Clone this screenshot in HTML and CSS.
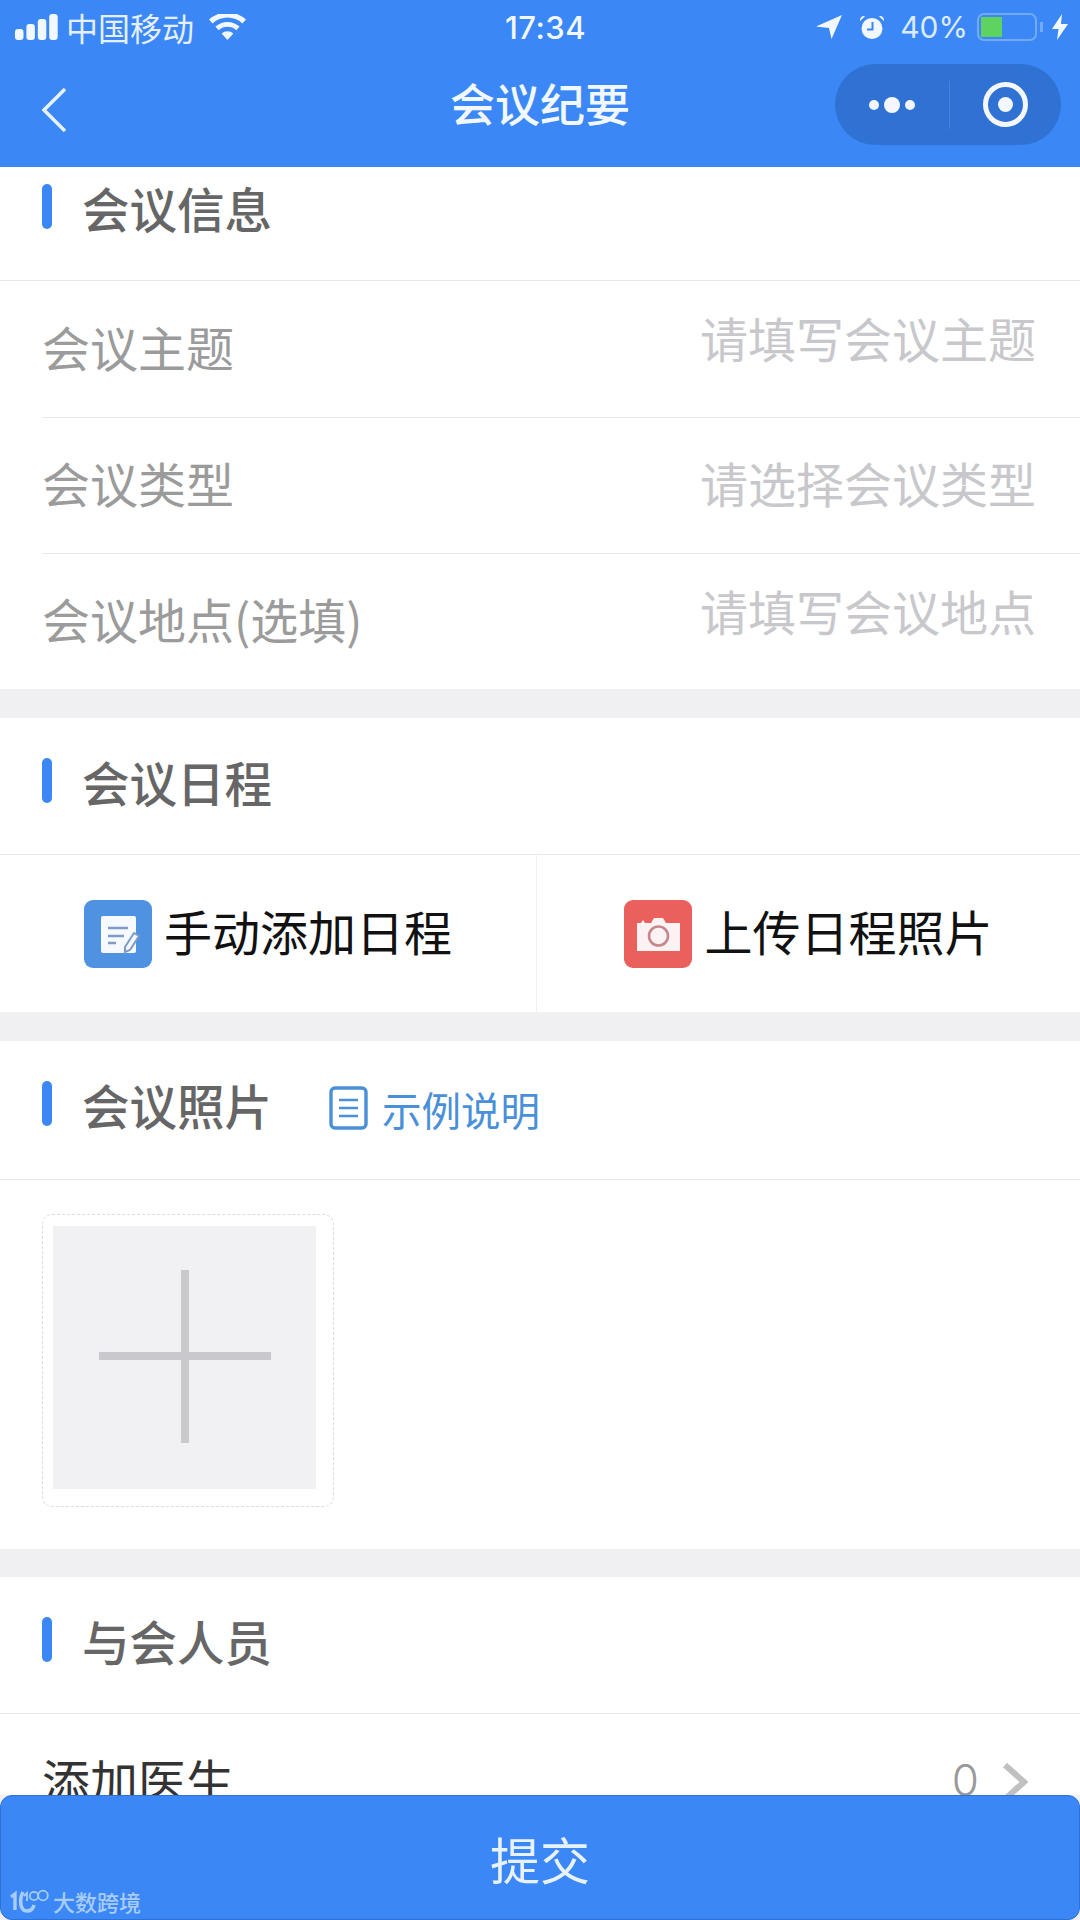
FILE: index.html
```html
<!DOCTYPE html>
<html lang="zh-CN">
<head>
   <meta charset="UTF-8">
   <meta name="viewport" content="width=device-width, initial-scale=1.0">
   <title>会议纪要</title>
   <link rel="stylesheet" href="styles.css">
</head>
<body>
   <!-- Status bar and navigation bar -->
   <header class="top">
       <div class="status">
           <div class="status-left">
               <svg class="signal" width="43" height="26" viewBox="0 0 43 26">
                   <rect x="0" y="15" width="8.5" height="11" rx="3"/>
                   <rect x="11.4" y="10" width="8.5" height="16" rx="3"/>
                   <rect x="22.8" y="5" width="8.5" height="21" rx="3"/>
                   <rect x="34.2" y="0" width="8.5" height="26" rx="3"/>
               </svg>
               <span class="carrier">中国移动</span>
               <svg class="wifi" width="37" height="26" viewBox="0 0 37 26">
                   <path d="M18.5 26 L12.6 19.4 A9 9 0 0 1 24.4 19.4 Z"/>
                   <path d="M9.6 16.2 L6.4 12.6 A18 18 0 0 1 30.6 12.6 L27.4 16.2 A13.4 13.4 0 0 0 9.6 16.2 Z"/>
                   <path d="M3.6 9.4 L0 5.6 A27 27 0 0 1 37 5.6 L33.4 9.4 A22 22 0 0 0 3.6 9.4 Z"/>
               </svg>
           </div>
           <span class="time">17:34</span>
           <div class="status-right">
               <svg class="locate" width="26" height="24" viewBox="0 0 26 24">
                   <path d="M26 0 L0 11.5 L13 13 L15.5 24 Z"/>
               </svg>
               <svg class="alarm" width="26" height="24" viewBox="0 0 26 24">
                   <circle cx="13" cy="13.5" r="10.5"/>
                   <path class="alarm-hand" d="M13.5 7 V14.5 H8" fill="none" stroke-width="2"/>
                   <path d="M1 6 L6 1.2 A4 4 0 0 0 1 6 Z M25 6 L20 1.2 A4 4 0 0 1 25 6 Z"/>
               </svg>
               <span class="battery-text">40%</span>
               <div class="battery"><div class="battery-fill"></div></div>
               <div class="battery-tip"></div>
               <svg class="bolt" width="16" height="26" viewBox="0 0 16 26">
                   <path d="M10 0 L0 15 H6.5 L5 26 L16 10 H9 Z"/>
               </svg>
           </div>
       </div>
       <nav class="nav">
           <svg class="back" width="24" height="44" viewBox="0 0 24 44">
               <path d="M23 1 L2 22 L23 43" fill="none" stroke-width="3.5"/>
           </svg>
           <h1 class="title">会议纪要</h1>
           <div class="capsule">
               <div class="capsule-dots">
                   <i class="dot"></i><i class="dot dot-big"></i><i class="dot"></i>
               </div>
               <div class="capsule-line"></div>
               <div class="capsule-target"><i class="target-dot"></i></div>
           </div>
       </nav>
   </header>

   <main class="content">
       <div class="scroll">
           <!-- 会议信息 -->
           <section class="card">
               <div class="head"><i class="head-bar"></i><h2 class="head-text">会议信息</h2></div>
               <div class="row">
                   <span class="label">会议主题</span>
                   <span class="holder holder-up">请填写会议主题</span>
               </div>
               <div class="row row-line">
                   <span class="label">会议类型</span>
                   <span class="holder">请选择会议类型</span>
               </div>
               <div class="row row-line">
                   <span class="label">会议地点(选填)</span>
                   <span class="holder holder-up">请填写会议地点</span>
               </div>
           </section>

           <!-- 会议日程 -->
           <section class="card">
               <div class="head"><i class="head-bar"></i><h2 class="head-text">会议日程</h2></div>
               <div class="actions">
                   <div class="action action-left">
                       <svg class="action-icon" width="68" height="68" viewBox="0 0 68 68">
                           <rect width="68" height="68" rx="9" fill="#5092e2"/>
                           <rect x="17" y="16" width="35" height="37" rx="2" fill="#f6f9fd"/>
                           <path d="M24 28 H44 M24 36 H40 M24 43 H32" stroke="#7b9cc6" stroke-width="2.6" fill="none"/>
                           <path d="M41 47 L50 33 L55 36 L46 50 L41 52 Z" fill="#f6f9fd" stroke="#7b9cc6" stroke-width="2"/>
                       </svg>
                       <span class="action-text">手动添加日程</span>
                   </div>
                   <div class="action">
                       <svg class="action-icon" width="68" height="68" viewBox="0 0 68 68">
                           <rect width="68" height="68" rx="9" fill="#e9605c"/>
                           <path d="M13 23 H17 L19 20 L21 23 H27 L30 18 H39 L42 23 H56 V51 H13 Z" fill="#fbf3f3"/>
                           <circle cx="34.5" cy="36" r="9.5" fill="#fbf3f3" stroke="#c8878c" stroke-width="2.6"/>
                       </svg>
                       <span class="action-text">上传日程照片</span>
                   </div>
               </div>
           </section>

           <!-- 会议照片 -->
           <section class="card card-photo">
               <div class="head head-tall">
                   <i class="head-bar"></i><h2 class="head-text">会议照片</h2>
                   <svg class="doc" width="39" height="44" viewBox="0 0 39 44">
                       <rect x="2" y="2" width="35" height="40" rx="4" fill="none" stroke="#4a90d9" stroke-width="3.4"/>
                       <path d="M10 14 H29 M10 22 H29 M10 30 H29" stroke="#4a90d9" stroke-width="2.6" fill="none"/>
                   </svg>
                   <span class="doc-text">示例说明</span>
               </div>
               <div class="photos">
                   <div class="photo-box">
                       <div class="photo-add"><i class="plus-h"></i><i class="plus-v"></i></div>
                   </div>
               </div>
           </section>

           <!-- 与会人员 -->
           <section class="card">
               <div class="head"><i class="head-bar"></i><h2 class="head-text">与会人员</h2></div>
               <div class="row row-doctor">
                   <span class="label label-dark">添加医生</span>
                   <span class="count">0</span>
                   <svg class="more" width="26" height="38" viewBox="0 0 26 38">
                       <path d="M3 2 L22 19 L3 36" fill="none" stroke-width="6"/>
                   </svg>
               </div>
           </section>
       </div>
   </main>

   <!-- Submit button with the watermark over it -->
   <button class="submit">提交</button>
   <div class="mark">
       <svg width="39" height="24" viewBox="0 0 39 24">
           <path d="M1 8 L5 5 V21" fill="none" stroke-width="3.4"/>
           <path d="M13 3 C9 11 10 22 17 22 C20 22 23 20 24 16" fill="none" stroke-width="3.6"/>
           <path d="M14 7 L17 4 V12" fill="none" stroke-width="1.8"/>
           <circle cx="24" cy="7" r="4.2" fill="none" stroke-width="1.8"/>
           <circle cx="33" cy="6.5" r="4.8" fill="none" stroke-width="1.8"/>
       </svg>
       <span class="mark-text">大数跨境</span>
   </div>
</body>
</html>
```

FILE: styles.css
```css
/* page */
body {
    position: relative;
    display: flex;
    flex-direction: column;
    width: 1080px;
    height: 1920px;
    margin: 0;
    overflow: hidden;
    background-color: #f0f0f2;
    font-family: "Noto Sans CJK SC", "Noto Sans", sans-serif;
}

/* top blue area */
.top {
    flex: none;
    height: 167px;
    background-color: #3b87f5;
    color: #f2f8ff;
}

.status {
    display: grid;
    grid-template-columns: 1fr auto 1fr;
    align-items: center;
    height: 54px;
}

.status svg {
    fill: #f2f8ff;
    flex: none;
}

.status-left {
    display: flex;
    align-items: center;
    padding-left: 15px;
}

.carrier {
    margin-left: 8px;
    font-size: 32px;
    line-height: 40px;
    color: #e4f0ff;
}

.wifi {
    margin-left: 15px;
}

.time {
    margin-left: 11px;
    font-family: Inter, "Liberation Sans", sans-serif;
    font-size: 31px;
    font-weight: 500;
    letter-spacing: 0.5px;
}

.status-right {
    display: flex;
    align-items: center;
    justify-content: flex-end;
    padding-right: 12px;
}

.alarm {
    margin-left: 17px;
}

.alarm-hand {
    stroke: #3b87f5;
}

.battery-text {
    margin-left: 15px;
    font-family: Inter, "Liberation Sans", sans-serif;
    font-size: 30px;
    color: #dcebff;
}

.battery {
    box-sizing: border-box;
    width: 60px;
    height: 28px;
    margin-left: 9px;
    padding: 2px;
    border: 2px solid #72abf5;
    border-radius: 7px;
}

.battery-fill {
    width: 21px;
    height: 20px;
    background-color: #5fd35f;
}

.battery-tip {
    width: 3px;
    height: 10px;
    margin-left: 3px;
    background-color: #72abf5;
}

.bolt {
    margin-left: 9px;
}

.nav {
    display: grid;
    grid-template-columns: 1fr auto 1fr;
    align-items: center;
    height: 101px;
}

.back {
    margin-top: 11px;
    margin-left: 42px;
    stroke: #e8f2ff;
}

.title {
    margin: 0 0 4px;
    font-size: 45px;
    font-weight: 500;
    line-height: 60px;
}

.capsule {
    justify-self: end;
    display: flex;
    align-items: center;
    width: 226px;
    height: 81px;
    margin-right: 19px;
    border-radius: 41px;
    background-color: #2f72d4;
}

.capsule-dots {
    display: flex;
    align-items: center;
    justify-content: center;
    gap: 5px;
    width: 114px;
}

.dot {
    width: 10px;
    height: 10px;
    border-radius: 50%;
    background-color: #f4f8fe;
}

.dot-big {
    width: 16px;
    height: 16px;
}

.capsule-line {
    width: 1px;
    height: 48px;
    background-color: #4a85dc;
}

.capsule-target {
    box-sizing: border-box;
    display: flex;
    align-items: center;
    justify-content: center;
    width: 45px;
    height: 45px;
    margin-left: 33px;
    border: 5px solid #f4f8fe;
    border-radius: 50%;
}

.target-dot {
    width: 15px;
    height: 15px;
    border-radius: 50%;
    background-color: #f4f8fe;
}

/* scrolled content, first header sits partly under the nav */
.content {
    flex: 1;
    overflow: hidden;
}

.scroll {
    margin-top: -23px;
}

.card {
    margin-bottom: 29px;
    background-color: #fff;
}

.card-photo {
    margin-bottom: 28px;
}

.head {
    display: flex;
    align-items: center;
    height: 136px;
    padding-left: 42px;
    border-bottom: 1px solid #e8e8ea;
}

.head-tall {
    height: 136px;
    padding-bottom: 2px;
}

.head-bar {
    width: 10px;
    height: 45px;
    margin-bottom: 11px;
    border-radius: 5px;
    background-color: #3b87f5;
}

.head-text {
    margin: 0 0 9px 30px;
    font-size: 47.5px;
    font-weight: 500;
    line-height: 60px;
    color: #666;
}

/* form rows */
.row {
    display: flex;
    align-items: center;
    justify-content: space-between;
    height: 136px;
    margin-left: 42px;
    padding-right: 44px;
}

.row-line {
    box-sizing: border-box;
    border-top: 1px solid #e8e8ea;
}

.label {
    margin-bottom: 7px;
    font-size: 48px;
    line-height: 60px;
    color: #9b9b9b;
}

.label-dark {
    margin-right: auto;
    color: #333;
}

.holder {
    margin-bottom: 7px;
    font-size: 48px;
    line-height: 60px;
    color: #c8c8cc;
}

.holder-up {
    margin-bottom: 24px;
}

.row-doctor {
    padding-right: 52px;
}

.count {
    margin-bottom: 4px;
    font-family: Inter, "Liberation Sans", sans-serif;
    font-size: 44px;
    font-weight: 300;
    color: #999;
}

.more {
    margin-left: 23px;
    stroke: #c0c0c0;
}

/* action buttons */
.actions {
    display: flex;
    height: 157px;
}

.action {
    flex: 1;
    display: flex;
    align-items: center;
    justify-content: center;
    gap: 12px;
}

.action-left {
    flex: none;
    width: 536px;
    border-right: 1px solid #f0f0f2;
}

.action-text {
    margin-bottom: 7px;
    font-size: 48px;
    line-height: 60px;
    color: #111;
}

.doc {
    margin-bottom: 3px;
    margin-left: 57px;
}

.doc-text {
    margin-left: 14px;
    font-size: 39.5px;
    line-height: 50px;
    color: #4a90d9;
}

/* photo picker */
.photos {
    padding: 34px 0 42px 42px;
}

.photo-box {
    box-sizing: border-box;
    width: 292px;
    height: 293px;
    padding: 11px 10px;
    border: 1px dashed #dcdcdf;
    border-radius: 10px;
}

.photo-add {
    position: relative;
    width: 263px;
    height: 263px;
    background-color: #f1f0f3;
}

.plus-h {
    position: absolute;
    left: 46px;
    top: 126px;
    width: 172px;
    height: 8px;
    background-color: #c9c8cc;
}

.plus-v {
    position: absolute;
    left: 128px;
    top: 44px;
    width: 8px;
    height: 173px;
    background-color: #c9c8cc;
}

/* submit button */
.submit {
    flex: none;
    height: 125px;
    padding: 0;
    border: 1px solid #2f72d4;
    border-radius: 12px;
    background-color: #3b87f5;
    font-family: inherit;
    font-size: 50px;
    color: #e8f2ff;
}

/* watermark */
.mark {
    position: absolute;
    left: 10px;
    top: 1888px;
    display: flex;
    align-items: center;
    gap: 4px;
}

.mark svg {
    stroke: #a8ccf8;
}

.mark-text {
    font-size: 22px;
    font-weight: 500;
    line-height: 26px;
    color: #a8ccf8;
}
```
